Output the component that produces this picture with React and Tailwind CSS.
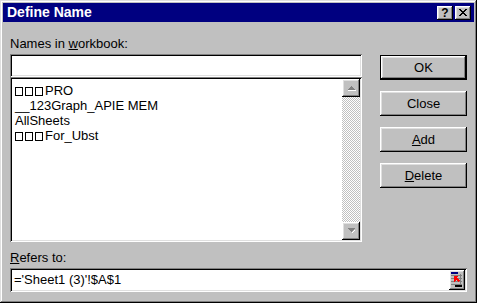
import React from "react";

const raised =
  "shadow-[inset_-1px_-1px_#000,inset_1px_1px_#fff,inset_-2px_-2px_#808080,inset_2px_2px_#dfdfdf]";
const sunken =
  "shadow-[inset_1px_1px_#808080,inset_-1px_-1px_#fff,inset_2px_2px_#000,inset_-2px_-2px_#dfdfdf]";

function Tofu({ n }) {
  return (
    <>
      {Array.from({ length: n }).map((_, i) => (
        <span
          key={i}
          className="inline-block w-[8px] h-[9px] border border-black mr-[2px] align-[-1px]"
        />
      ))}
    </>
  );
}

function Btn({ children, def }) {
  return (
    <div
      className={
        "h-[25px] w-[87px] bg-[#c0c0c0] flex items-center justify-center " +
        (def
          ? "border border-black shadow-[inset_-1px_-1px_#000,inset_1px_1px_#fff,inset_-2px_-2px_#808080,inset_2px_2px_#dfdfdf]"
          : raised)
      }
    >
      {children}
    </div>
  );
}

function Arrow({ up }) {
  return (
    <svg width="9" height="6" viewBox="0 0 9 6" shapeRendering="crispEdges">
      {up ? (
        <>
          <path d="M4 1h1v1h1v1h1v1h1v1H1V4h1V3h1V2h1z" fill="#808080" />
          <path d="M1 5h8v1H1z" fill="#fff" />
        </>
      ) : (
        <>
          <path d="M1 0h7v1H7v1H6v1H5v1H4V3H3V2H2V1H1z" fill="#808080" />
          <path d="M5 4h1V3h1V2h1v1H7v1H6v1H5z" fill="#fff" />
        </>
      )}
    </svg>
  );
}

export default function App() {
  return (
    <div className="w-[477px] h-[303px] bg-[#c0c0c0] p-[3px] shadow-[inset_-1px_-1px_#000,inset_1px_1px_#dfdfdf,inset_-2px_-2px_#808080,inset_2px_2px_#fff] font-['Liberation_Sans',Arial,sans-serif] text-[13px] text-black">
      <div className="h-[19px] bg-[#000080] flex items-center justify-between pl-[4px] pr-[3px]">
        <span className="text-white font-bold text-[14px] leading-[19px]">
          Define Name
        </span>
        <div className="flex gap-[2px]">
          <div
            className={
              "w-[16px] h-[14px] bg-[#c0c0c0] flex items-center justify-center font-bold text-[12px] leading-none " +
              raised
            }
          >
            ?
          </div>
          <div
            className={
              "w-[16px] h-[14px] bg-[#c0c0c0] flex items-center justify-center " +
              raised
            }
          >
            <svg width="8" height="7" viewBox="0 0 8 7" shapeRendering="crispEdges">
              <path
                d="M0 0h2v1h1v1h2V1h1V0h2v1H7v1H6v1H5v1h1v1h1v1h1v1H6V6H5V5H3v1H2v1H0V6h1V5h1V4h1V3H2V2H1V1H0z"
                fill="#000"
              />
            </svg>
          </div>
        </div>
      </div>

      <div className="px-[7px] pt-[14px]">
        <div className="flex gap-[18px]">
          <div className="w-[352px] flex flex-col">
            <div className="leading-[16px] h-[16px]">
              Names in <span className="underline">w</span>orkbook:
            </div>
            <div className={"mt-[2px] h-[23px] bg-white " + sunken} />
            <div className={"h-[165px] bg-white p-[2px] flex " + sunken}>
              <div className="flex-1 pl-[3px] pt-[4px] leading-[15px]">
                <div>
                  <Tofu n={3} />
                  PRO
                </div>
                <div>__123Graph_APIE MEM</div>
                <div>AllSheets</div>
                <div>
                  <Tofu n={3} />
                  For_Ubst
                </div>
              </div>
              <div className="w-[18px] flex flex-col">
                <div
                  className={
                    "h-[18px] bg-[#c0c0c0] flex items-center justify-center " +
                    raised
                  }
                >
                  <Arrow up />
                </div>
                <div className="flex-1 bg-[repeating-conic-gradient(#c0c0c0_0%_25%,#fff_0%_50%)] bg-[length:2px_2px]" />
                <div
                  className={
                    "h-[18px] bg-[#c0c0c0] flex items-center justify-center " +
                    raised
                  }
                >
                  <Arrow />
                </div>
              </div>
            </div>
          </div>
          <div className="w-[87px] pt-[19px] flex flex-col gap-[11px]">
            <Btn def>OK</Btn>
            <Btn>Close</Btn>
            <Btn>
              <span>
                <span className="underline">A</span>dd
              </span>
            </Btn>
            <Btn>
              <span>
                <span className="underline">D</span>elete
              </span>
            </Btn>
          </div>
        </div>
        <div className="mt-[8px] leading-[16px] h-[16px]">
          <span className="underline">R</span>efers to:
        </div>
        <div
          className={
            "mt-[2px] h-[24px] w-[457px] bg-white p-[2px] flex items-center " +
            sunken
          }
        >
          <span className="flex-1 pl-[2px] leading-[16px]">
            ='Sheet1 (3)'!$A$1
          </span>
          <div
            className={
              "w-[16px] h-[20px] bg-[#c0c0c0] flex items-center justify-center " +
              raised
            }
          >
            <svg width="12" height="16" viewBox="0 0 12 16" shapeRendering="crispEdges">
              <rect x="0" y="0" width="7" height="2" fill="#000080" />
              <rect x="0" y="3" width="11" height="1" fill="#808080" />
              <rect x="0" y="6" width="11" height="1" fill="#808080" />
              <rect x="0" y="9" width="11" height="1" fill="#808080" />
              <rect x="0" y="12" width="11" height="1" fill="#808080" />
              <rect x="9" y="2" width="1" height="12" fill="#808080" />
              <path d="M3 4h4v1H6v1h1v1h1v1h1v1H8v1H7V9H6V8H5V9H4v1H3z" fill="#ff0000" />
              <rect x="4" y="13" width="7" height="2" fill="#000" />
            </svg>
          </div>
        </div>
      </div>
    </div>
  );
}
